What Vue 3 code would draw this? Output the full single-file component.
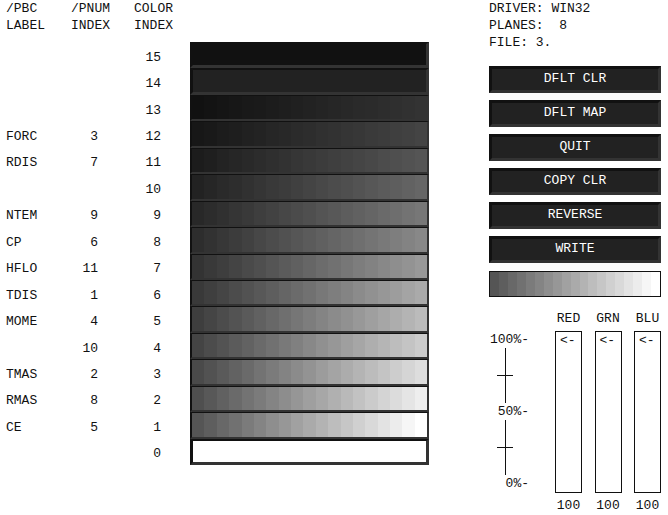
<script setup>
import { reactive, ref } from 'vue'

const STEPS = 19

const entries = {
  12: ['FORC', 3],
  11: ['RDIS', 7],
  9: ['NTEM', 9],
  8: ['CP', 6],
  7: ['HFLO', 11],
  6: ['TDIS', 1],
  5: ['MOME', 4],
  4: ['', 10],
  3: ['TMAS', 2],
  2: ['RMAS', 8],
  1: ['CE', 5],
}

const gray = (v) => `rgb(${v}, ${v}, ${v})`

// Each ramp runs from a third of its brightest level up to that level.
function ramp(top) {
  return Array.from({ length: STEPS }, (_, i) =>
    gray(Math.round(top / 3 + ((top * 2) / 3) * (i / (STEPS - 1))))
  )
}

const rows = Array.from({ length: 16 }, (_, i) => {
  const index = 15 - i
  const [label, pnum] = entries[index] || ['', '']
  const solid = index > 13 || index === 0
  const level = index === 0 ? 255 : 17 * (16 - index)
  return { index, label, pnum, solid, colors: solid ? [gray(level)] : ramp(level) }
})

const preview = ramp(255)
const info = ['DRIVER: WIN32', 'PLANES:  8', 'FILE: 3.']
const actions = ['DFLT CLR', 'DFLT MAP', 'QUIT', 'COPY CLR', 'REVERSE', 'WRITE']
const selected = ref(1)
const channels = reactive([
  { name: 'RED', value: 100 },
  { name: 'GRN', value: 100 },
  { name: 'BLU', value: 100 },
])
</script>

<template>
  <main class="editor">
    <table class="map">
      <thead>
        <tr>
          <th class="label">/PBC<br>LABEL</th>
          <th class="pnum">/PNUM<br>INDEX</th>
          <th class="index">COLOR<br>INDEX</th>
          <th></th>
        </tr>
      </thead>
      <tbody>
        <tr v-for="row in rows" :key="row.index" @click="selected = row.index">
          <td class="label">{{ row.label }}</td>
          <td class="pnum num">{{ row.pnum }}</td>
          <td class="index num">{{ row.index }}</td>
          <td class="swatch" :class="{ solid: row.solid }">
            <div class="ramp">
              <span v-for="(c, i) in row.colors" :key="i" :style="{ background: c }"></span>
            </div>
          </td>
        </tr>
      </tbody>
    </table>

    <aside class="panel">
      <div v-for="line in info" :key="line" class="info">{{ line }}</div>

      <div class="actions">
        <button v-for="a in actions" :key="a" type="button">{{ a }}</button>
      </div>

      <div class="preview ramp">
        <span v-for="(c, i) in preview" :key="i" :style="{ background: c }"></span>
      </div>

      <div class="mixer">
        <div class="scale">
          <span>100%-</span>
          <i class="axis"></i>
          <span>50%-</span>
          <i class="axis"></i>
          <span>0%-</span>
        </div>
        <div class="channels">
          <div v-for="ch in channels" :key="ch.name" class="channel">
            <label :for="ch.name">{{ ch.name }}</label>
            <div class="track">
              <input :id="ch.name" v-model.number="ch.value" type="range" min="0" max="100">
              <span class="arrow" :style="{ top: (100 - ch.value) * 0.89 + '%' }">&lt;-</span>
            </div>
            <output :for="ch.name">{{ ch.value }}</output>
          </div>
        </div>
      </div>
    </aside>
  </main>
</template>

<style>
body {
  background: #fff;
}
</style>

<style scoped>
.editor {
  display: flex;
  align-items: flex-start;
  gap: 60px;
  padding: 0 7px 0 6px;
  color: #111;
  font: 13px/17px "Courier New", "Liberation Mono", monospace;
}

.map {
  flex: 1;
  height: 465px;
  table-layout: fixed;
  border-collapse: separate;
  border-spacing: 0;
}

.map th,
.map td {
  padding: 0;
  font-weight: normal;
  text-align: left;
  vertical-align: middle;
}

.map th {
  height: 42px;
  vertical-align: top;
}

.map .label {
  width: 65px;
}

.map .pnum {
  width: 63px;
}

.map .index {
  width: 56px;
}

.map .pnum,
.map .index {
  box-sizing: border-box;
}

.map td.label,
.map td.num {
  padding-top: 4px;
}

.map td.num {
  text-align: right;
}

.map td.pnum {
  padding-right: 36px;
}

.map td.index {
  padding-right: 29px;
}

.map .swatch {
  height: 1px;
  border: 2px solid;
  border-width: 1px 2px 2px;
  border-color: #111 #333 #333 #111;
  background: #111;
}

.map .swatch.solid {
  border-width: 2px 3px 3px;
}

.ramp {
  display: flex;
  height: 100%;
}

.ramp span {
  flex: 1;
}

.panel {
  flex: 0 0 172px;
}

.info {
  white-space: pre;
}

.actions {
  display: grid;
  gap: 7px;
  padding-top: 15px;
}

.actions button {
  height: 27px;
  padding: 0 0 2px;
  border: 3px solid;
  border-color: #111 #333 #333 #111;
  background: #222;
  color: #fff;
  font: inherit;
}

.preview {
  box-sizing: border-box;
  height: 26px;
  margin-top: 8px;
  border: 1px solid #111;
}

.mixer {
  display: flex;
  justify-content: space-between;
  padding-top: 13px;
}

.scale {
  display: flex;
  flex-direction: column;
  align-items: flex-end;
  width: 40px;
  padding-top: 21px;
}

.axis {
  width: 16px;
  height: 55px;
  margin-right: 16px;
  background:
    linear-gradient(#111, #111) center / 1px 100% no-repeat,
    linear-gradient(#111, #111) center / 100% 1px no-repeat;
}

.channels {
  display: flex;
  justify-content: space-between;
  width: 106px;
}

.channel {
  display: flex;
  flex-direction: column;
  align-items: center;
  width: 27px;
}

.track {
  position: relative;
  box-sizing: border-box;
  width: 100%;
  height: 162px;
  margin: 4px 0;
  border: 1px solid #111;
}

.track input {
  display: block;
  width: 100%;
  height: 100%;
  margin: 0;
  appearance: none;
  background: transparent;
  writing-mode: vertical-lr;
  direction: rtl;
}

.track input::-webkit-slider-thumb {
  appearance: none;
  width: 25px;
  height: 17px;
  background: transparent;
}

.arrow {
  position: absolute;
  left: 4px;
  pointer-events: none;
}
</style>
